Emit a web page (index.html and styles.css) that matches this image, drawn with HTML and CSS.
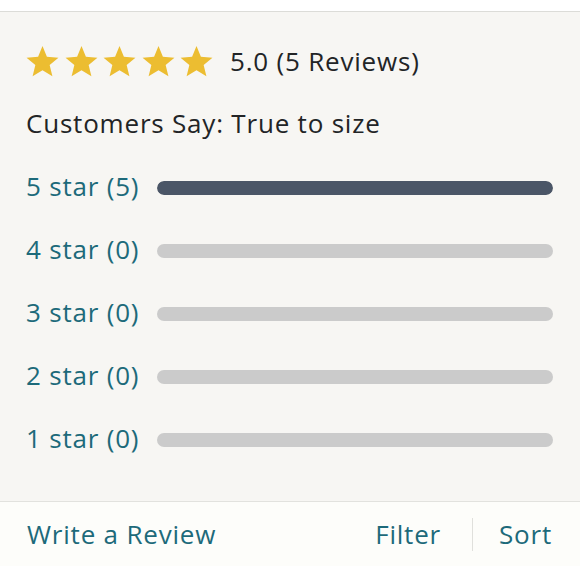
FILE: index.html
```html
<!DOCTYPE html>
<html>
<head>
<meta charset="utf-8">
<link rel="stylesheet" href="styles.css">
</head>
<body>
<div class="panel">
  <div class="row rating">
    <div class="stars">
      <svg class="star" viewBox="0 0 24 24"><path d="M12 .8l3.2 7.8 8.4.6-6.4 5.4 2 8.2L12 18.4 4.8 22.8l2-8.2L.4 9.2l8.4-.6z"/></svg>
      <svg class="star" viewBox="0 0 24 24"><path d="M12 .8l3.2 7.8 8.4.6-6.4 5.4 2 8.2L12 18.4 4.8 22.8l2-8.2L.4 9.2l8.4-.6z"/></svg>
      <svg class="star" viewBox="0 0 24 24"><path d="M12 .8l3.2 7.8 8.4.6-6.4 5.4 2 8.2L12 18.4 4.8 22.8l2-8.2L.4 9.2l8.4-.6z"/></svg>
      <svg class="star" viewBox="0 0 24 24"><path d="M12 .8l3.2 7.8 8.4.6-6.4 5.4 2 8.2L12 18.4 4.8 22.8l2-8.2L.4 9.2l8.4-.6z"/></svg>
      <svg class="star" viewBox="0 0 24 24"><path d="M12 .8l3.2 7.8 8.4.6-6.4 5.4 2 8.2L12 18.4 4.8 22.8l2-8.2L.4 9.2l8.4-.6z"/></svg>
    </div>
    <span class="score">5.0 (5 Reviews)</span>
  </div>
  <div class="row says">Customers Say: True to size</div>
  <div class="row dist"><span class="label">5 star (5)</span><div class="track"><div class="fill" style="width:100%"></div></div></div>
  <div class="row dist"><span class="label">4 star (0)</span><div class="track"><div class="fill" style="width:0%"></div></div></div>
  <div class="row dist"><span class="label">3 star (0)</span><div class="track"><div class="fill" style="width:0%"></div></div></div>
  <div class="row dist"><span class="label">2 star (0)</span><div class="track"><div class="fill" style="width:0%"></div></div></div>
  <div class="row dist"><span class="label">1 star (0)</span><div class="track"><div class="fill" style="width:0%"></div></div></div>
</div>
<div class="footer">
  <a class="link write">Write a Review</a>
  <div class="actions">
    <a class="link">Filter</a>
    <span class="divider"></span>
    <a class="link">Sort</a>
  </div>
</div>
</body>
</html>
```
FILE: styles.css
```css
* { box-sizing: border-box; }
html, body { margin: 0; padding: 0; background: #ffffff; }
body {
  font-family: "Open Sans", "Noto Sans", sans-serif;
  font-size: 26px;
  letter-spacing: 0.8px;
  color: #222426;
}
.panel {
  margin-top: 11px;
  border-top: 1px solid #dcdcd8;
  border-bottom: 1px solid #e2e2de;
  background: #f7f6f3;
  padding: 18px 27px 30px 26px;
}
.row {
  height: 63px;
  display: flex;
  align-items: center;
}
.stars { display: flex; gap: 5.5px; }
.star { width: 33px; height: 33px; fill: #ecbd31; }
.score { margin-left: 17px; padding-bottom: 2px; }
.says { padding-bottom: 3px; }
.label {
  width: 131px;
  color: #1d6a7a;
  flex: none;
  padding-bottom: 3px;
}
.track {
  flex: 1;
  height: 14px;
  border-radius: 7px;
  background: #cbcbcb;
  overflow: hidden;
}
.fill { height: 100%; background: #4b5667; border-radius: 7px; }
.footer {
  height: 64px;
  background: #fdfdfa;
  display: flex;
  align-items: center;
  justify-content: space-between;
  padding: 0 28px 0 27px;
}
.link { color: #1d6a7a; }
.actions { display: flex; align-items: center; }
.divider {
  width: 1px;
  height: 33px;
  background: #e0e0dc;
  margin: 0 26px 0 31px;
}
```
